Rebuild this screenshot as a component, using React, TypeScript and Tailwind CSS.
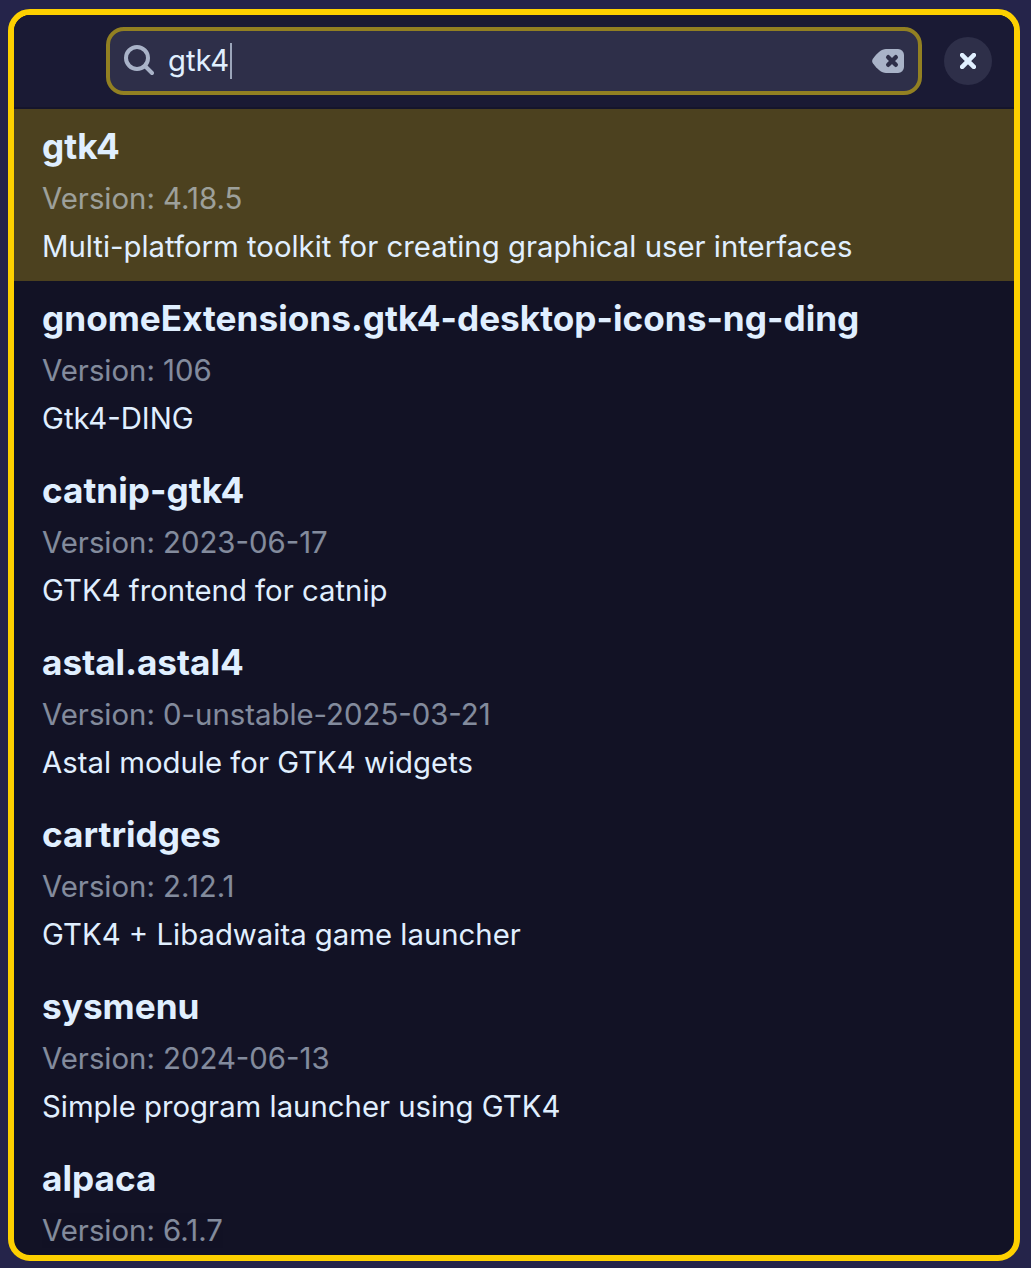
import React from "react";

const packages = [
  { name: "gtk4", version: "4.18.5", description: "Multi-platform toolkit for creating graphical user interfaces" },
  { name: "gnomeExtensions.gtk4-desktop-icons-ng-ding", version: "106", description: "Gtk4-DING" },
  { name: "catnip-gtk4", version: "2023-06-17", description: "GTK4 frontend for catnip" },
  { name: "astal.astal4", version: "0-unstable-2025-03-21", description: "Astal module for GTK4 widgets" },
  { name: "cartridges", version: "2.12.1", description: "GTK4 + Libadwaita game launcher" },
  { name: "sysmenu", version: "2024-06-13", description: "Simple program launcher using GTK4" },
  { name: "alpaca", version: "6.1.7", description: "" },
];

function SearchIcon() {
  return (
    <svg width="32" height="32" viewBox="0 0 32 32" fill="none" stroke="#a9b3c8" strokeWidth="4">
      <circle cx="15" cy="13" r="11" />
      <path d="M23 21l7 7" strokeLinecap="round" />
    </svg>
  );
}

function ClearIcon() {
  return (
    <svg width="32" height="24" viewBox="0 0 32 24">
      <path d="M14 0h12a6 6 0 0 1 6 6v12a6 6 0 0 1-6 6H14C9.500 24 5 20 .9 14.300Q-.7 12 .9 9.700C5 4 9.500 0 14 0Z" fill="#a9b3c8" />
      <path d="M16.200 8.200l7.600 7.600m0-7.600l-7.600 7.600" stroke="#2e2f49" strokeWidth="4.400" strokeLinecap="round" />
    </svg>
  );
}

export default function App() {
  return (
    <div className="h-[1268px] w-[1031px] overflow-hidden bg-[#25244a] pl-2 pt-[9px] font-[Inter,sans-serif]">
      <div className="flex h-[1252px] w-[1012px] flex-col overflow-hidden rounded-[22px] border-6 border-[#fdd000] bg-[#121225] text-[#e0efff]">
        <header className="flex h-[94px] shrink-0 items-start border-b-2 border-[#15152b] bg-[#1a1a34] pl-[92px] pt-3">
          <div className="flex h-[68px] w-[816px] items-center rounded-[18px] border-4 border-[#928022] bg-[#2e2f49] pl-3 pr-3.5">
            <SearchIcon />
            <span className="ml-3.5 text-[29.33px] leading-9">gtk4</span>
            <span className="ml-px h-9 w-0.5 bg-[#9ba5ba]" />
            <span className="ml-auto"><ClearIcon /></span>
          </div>
          <button aria-label="Close" className="ml-[22px] mt-2.5 flex size-12 items-center justify-center rounded-full bg-[#2e2f49]">
            <svg width="16" height="16" viewBox="0 0 16 16">
              <path d="M2.200 2.200l11.600 11.600M13.800 2.200L2.200 13.800" stroke="#e0efff" strokeWidth="4.600" strokeLinecap="round" />
            </svg>
          </button>
        </header>
        <main>
          {packages.map((item, index) => (
            <article key={item.name} className={`h-[172px] whitespace-nowrap px-7 pt-[15px] ${index === 0 ? "bg-[#4c411f]" : ""}`}>
              <h2 className="h-[51px] text-[35.2px] font-bold leading-[44px]">{item.name}</h2>
              <p className="h-12 text-[29.33px] leading-12 opacity-55">Version: {item.version}</p>
              <p className="h-12 text-[29.33px] leading-12">{item.description}</p>
            </article>
          ))}
        </main>
      </div>
    </div>
  );
}
